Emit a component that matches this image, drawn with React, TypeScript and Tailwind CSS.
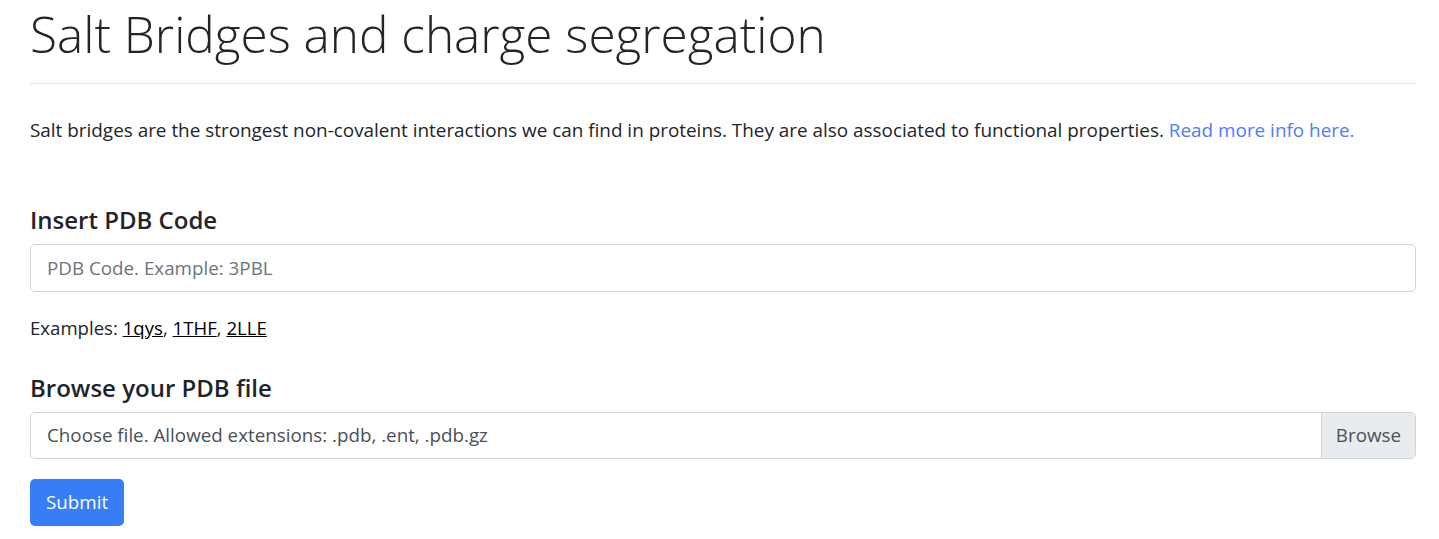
export default function App() {
  return (
    <div className="min-h-screen bg-white pl-[30px] pr-[23px] font-['Open_Sans',sans-serif] text-[#212529]">
      {/* page title */}
      <h1 className="mt-[4px] text-[49.5px] font-light leading-[60px]">
        Salt Bridges and charge segregation
      </h1>
      <hr className="mt-[19px] border-t border-black/10" />

      <p className="mt-[32px] text-[18.9px] leading-[28px]">
        Salt bridges are the strongest non-covalent interactions we can find in proteins. They are also associated to
        functional properties.{" "}
        <a href="#" className="text-[#4d7cfe]">
          Read more info here.
        </a>
      </p>

      <form className="flex flex-col">
        {/* pdb code */}
        <h4 className="mt-[61px] text-[24px] font-semibold leading-[29px]">Insert PDB Code</h4>
        <input
          type="text"
          placeholder="PDB Code. Example: 3PBL"
          className="mt-[10px] h-[48px] w-full rounded-[5px] border border-[#ced4da] px-4 text-[18.8px] text-[#495057] placeholder:text-[#6c757d] outline-none"
        />
        <p className="mt-[22px] text-[18.6px] leading-[28px]">
          Examples:{" "}
          <a href="#" className="text-black underline">
            1qys
          </a>
          ,{" "}
          <a href="#" className="text-black underline">
            1THF
          </a>
          ,{" "}
          <a href="#" className="text-black underline">
            2LLE
          </a>
        </p>

        {/* file upload */}
        <h4 className="mt-[31px] text-[24px] font-semibold leading-[29px]">Browse your PDB file</h4>
        <div className="mt-[10px] flex h-[47px] w-full overflow-hidden rounded-[5px] border border-[#ced4da] text-[18.8px] text-[#495057]">
          <span className="flex flex-1 items-center px-4">Choose file. Allowed extensions: .pdb, .ent, .pdb.gz</span>
          <span className="flex items-center border-l border-[#ced4da] bg-[#e9ecef] px-[14px]">Browse</span>
        </div>

        <div className="mt-[20px]">
          <button type="button" className="h-[47px] rounded-[5px] bg-[#377ef6] px-4 text-[18.8px] text-white">
            Submit
          </button>
        </div>
      </form>
    </div>
  );
}
